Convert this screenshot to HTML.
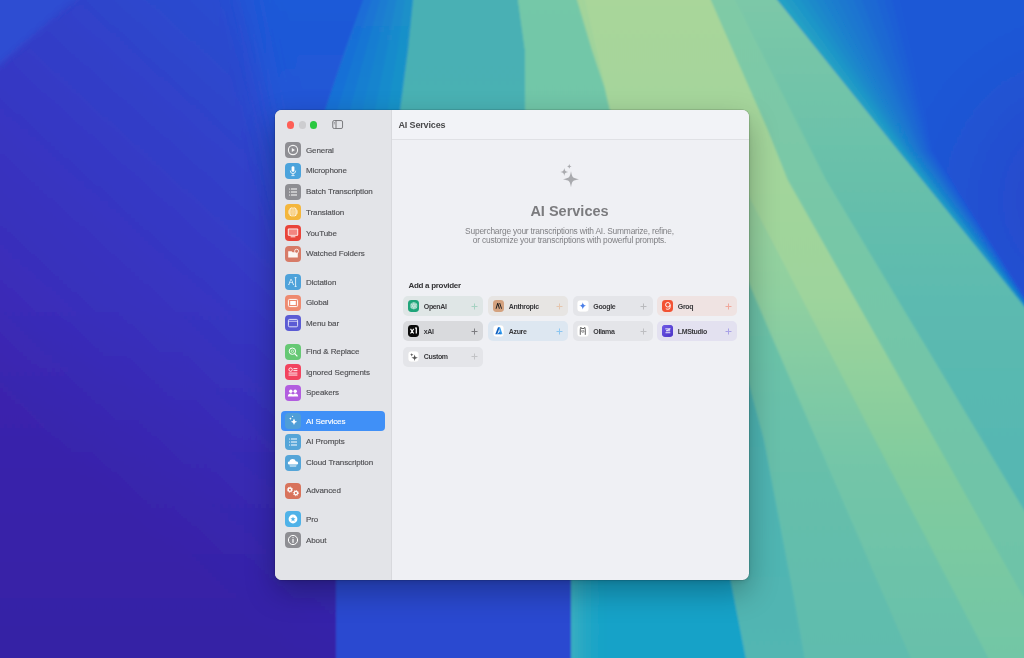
<!DOCTYPE html>
<html><head><meta charset="utf-8">
<style>
*{margin:0;padding:0;box-sizing:border-box}
html,body{width:1024px;height:658px;overflow:hidden;background:#2a4fd0;font-family:"Liberation Sans",sans-serif}
#bg{position:absolute;left:0;top:0;width:1024px;height:658px}
#win{will-change:transform;position:absolute;left:275px;top:110px;width:473.5px;height:470px;border-radius:6.5px;overflow:hidden;background:#eff0f4;
 box-shadow:0 0 0 0.5px rgba(0,0,0,.2),0 12px 30px rgba(0,0,0,.28),0 2px 5px rgba(0,0,0,.1)}
#side{position:absolute;left:0;top:0;width:116.5px;height:470px;background:#e3e4e8;border-right:1px solid #d8d9dd}
#hdr{position:absolute;left:116.5px;top:0;width:358px;height:29.6px;background:#f2f3f7;border-bottom:1px solid #e0e1e5}
.tl{position:absolute;top:11.2px;width:7.4px;height:7.4px;border-radius:50%}
.it{position:absolute;left:10px;height:16px;width:100px}
.ic{position:absolute;left:0;top:0;width:16px;height:16px;border-radius:4px}
.ic svg{position:absolute;left:0;top:0;width:16px;height:16px}
.lb{position:absolute;left:21px;top:2.7px;font-size:8px;line-height:12px;color:#4b4b4d;white-space:nowrap;letter-spacing:-.1px;-webkit-text-stroke:.15px currentColor}
#ttl{position:absolute;left:123.5px;top:9px;font-size:9px;line-height:12px;font-weight:bold;color:#4a4a4c;letter-spacing:-.15px}
#spk{position:absolute;left:284px;top:53px;width:24px;height:24px}
#big{position:absolute;left:116px;width:357px;top:91.9px;text-align:center;font-size:14.5px;line-height:18px;font-weight:bold;color:#7b7b7e}
#sub{position:absolute;left:116px;width:357px;top:116.9px;text-align:center;font-size:8.4px;line-height:9.3px;color:#808084;letter-spacing:-.2px}
#add{position:absolute;left:133.5px;top:171.3px;font-size:8px;line-height:10px;font-weight:bold;color:#333335;letter-spacing:-.3px}
.card{position:absolute;width:80px;height:20.3px;border-radius:5px}
.cic{position:absolute;left:4.5px;top:4.3px;width:11.6px;height:11.6px;border-radius:3.4px;overflow:hidden}
.cic svg{position:absolute;left:0;top:0;width:11.6px;height:11.6px}
.cn{position:absolute;left:20.6px;top:5.6px;font-size:7px;line-height:10px;font-weight:bold;color:#3a3a3d;letter-spacing:-.35px;white-space:nowrap}
.pl{position:absolute;left:67.8px;top:6.9px;width:7px;height:7px}
#sel{position:absolute;left:6.3px;top:300.8px;width:103.5px;height:20.6px;border-radius:4px;background:#4090f7}
</style></head><body>
<svg id="bg" viewBox="0 0 1024 658">
<defs>
<linearGradient id="gBase" x1="360" y1="0" x2="0" y2="400" gradientUnits="userSpaceOnUse">
<stop offset="0" stop-color="#2356d6"/><stop offset="0.3" stop-color="#2e46cc"/><stop offset="0.55" stop-color="#3638c4"/><stop offset="0.8" stop-color="#3a2eba"/><stop offset="1" stop-color="#3c26b0"/></linearGradient>
<linearGradient id="gDark" x1="0" y1="300" x2="0" y2="658" gradientUnits="userSpaceOnUse">
<stop offset="0" stop-color="#2a1890" stop-opacity="0"/><stop offset="1" stop-color="#2a1890" stop-opacity="0.35"/></linearGradient>
<linearGradient id="gBlue" x1="0" y1="0" x2="0" y2="658" gradientUnits="userSpaceOnUse">
<stop offset="0" stop-color="#1e5ad8"/><stop offset="0.5" stop-color="#2650d2"/><stop offset="1" stop-color="#2a48d0"/></linearGradient>
<linearGradient id="gBlueB" x1="0" y1="420" x2="0" y2="658" gradientUnits="userSpaceOnUse">
<stop offset="0" stop-color="#2a4cd0" stop-opacity="0"/><stop offset="0.4" stop-color="#2a4ad0"/><stop offset="1" stop-color="#2a48d0"/></linearGradient>
<linearGradient id="gTM" x1="0" y1="0" x2="0" y2="658" gradientUnits="userSpaceOnUse">
<stop offset="0" stop-color="#7cc8a8"/><stop offset="0.27" stop-color="#68c0aa"/><stop offset="0.46" stop-color="#5cbab0"/><stop offset="1" stop-color="#50b4b4"/></linearGradient>
<linearGradient id="gTeal" x1="0" y1="0" x2="0" y2="658" gradientUnits="userSpaceOnUse">
<stop offset="0" stop-color="#48b0b4"/><stop offset="1" stop-color="#52b6b2"/></linearGradient>
<linearGradient id="gGT" x1="0" y1="0" x2="0" y2="658" gradientUnits="userSpaceOnUse">
<stop offset="0" stop-color="#74c8a8"/><stop offset="0.5" stop-color="#6cc2a8"/><stop offset="1" stop-color="#60bcae"/></linearGradient>
<linearGradient id="gMG" x1="0" y1="0" x2="0" y2="658" gradientUnits="userSpaceOnUse">
<stop offset="0" stop-color="#a4d49a"/><stop offset="0.45" stop-color="#90d0a0"/><stop offset="0.7" stop-color="#74c6a8"/><stop offset="1" stop-color="#68c0aa"/></linearGradient>
<linearGradient id="gLG" x1="0" y1="0" x2="0" y2="658" gradientUnits="userSpaceOnUse">
<stop offset="0" stop-color="#a9d69a"/><stop offset="0.45" stop-color="#9ed49c"/><stop offset="0.7" stop-color="#82cc9e"/><stop offset="1" stop-color="#72c6a6"/></linearGradient>
<linearGradient id="gMint" x1="0" y1="0" x2="0" y2="658" gradientUnits="userSpaceOnUse">
<stop offset="0" stop-color="#80caa6"/><stop offset="0.5" stop-color="#74c6a8"/><stop offset="1" stop-color="#6cc2a8"/></linearGradient>
<linearGradient id="gTR" x1="901" y1="152" x2="1097" y2="-3" gradientUnits="userSpaceOnUse">
<stop offset="0" stop-color="#1a86d0"/><stop offset="0.05" stop-color="#1a70d2"/><stop offset="0.18" stop-color="#1a5ed4"/><stop offset="0.48" stop-color="#2250d2"/><stop offset="1" stop-color="#2e42c8"/></linearGradient>
<radialGradient id="gPur" cx="1090" cy="200" r="190" gradientUnits="userSpaceOnUse">
<stop offset="0" stop-color="#3240c6" stop-opacity="0.95"/><stop offset="0.45" stop-color="#2c46ca" stop-opacity="0.55"/><stop offset="1" stop-color="#2c46ca" stop-opacity="0"/></radialGradient>
<linearGradient id="gEdge" x1="571" y1="0" x2="615" y2="0" gradientUnits="userSpaceOnUse">
<stop offset="0" stop-color="#3aaec0" stop-opacity="1"/><stop offset="0.35" stop-color="#28a8c4" stop-opacity="0.8"/><stop offset="1" stop-color="#14a2c8" stop-opacity="0"/></linearGradient>
<filter id="blur4" x="-20%" y="-20%" width="140%" height="140%"><feGaussianBlur stdDeviation="3"/></filter>
<filter id="blur" x="-5%" y="-5%" width="110%" height="110%"><feGaussianBlur stdDeviation="1.2"/></filter>
<filter id="blurBig" x="-30%" y="-10%" width="160%" height="120%"><feGaussianBlur stdDeviation="14"/></filter>
</defs>
<g filter="url(#blur)">
<rect x="-30" y="-30" width="1090" height="720" fill="url(#gBase)"/>
<rect x="-30" y="-30" width="400" height="720" fill="url(#gDark)"/>
<g filter="url(#blur4)"><polygon points="-40.0,-40.0 118.0,-40.0 -40.0,100.0" fill="#2d4ed2"/></g>
<g filter="url(#blurBig)"><polygon points="235.0,-60.0 420.0,-60.0 440.0,300.0 580.0,560.0 580.0,720.0 370.0,720.0 355.0,500.0 285.0,200.0" fill="url(#gBlue)"/></g>
<polygon points="414.0,-30.0 1060.0,-30.0 1060.0,690.0 570.0,690.0" fill="url(#gTM)"/>
<polygon points="336.0,420.0 571.0,420.0 571.0,690.0 336.0,690.0" fill="url(#gBlueB)"/>
<linearGradient id="gC0" x1="0" y1="0" x2="0" y2="658" gradientUnits="userSpaceOnUse"><stop offset="0" stop-color="#1a6dd7"/><stop offset="0.17" stop-color="#1972d6"/><stop offset="0.85" stop-color="#14a2c8"/></linearGradient>
<polygon points="374.0,-30.0 363.0,0.0 345.0,50.0 325.0,110.0 400.0,300.0 571.0,560.0 571.0,580.0 571.0,690.0 601.8,690.0 598.2,580.0 597.3,560.0 417.3,291.7 338.1,110.0 356.1,50.0 371.9,0.0 381.9,-30.0" fill="url(#gC0)"/>
<linearGradient id="gC1" x1="0" y1="0" x2="0" y2="658" gradientUnits="userSpaceOnUse"><stop offset="0" stop-color="#1a74d4"/><stop offset="0.17" stop-color="#1979d3"/><stop offset="0.85" stop-color="#14a2c8"/></linearGradient>
<polygon points="381.3,-30.0 371.3,0.0 355.5,50.0 337.5,110.0 416.7,291.7 596.7,560.0 597.6,580.0 601.2,690.0 631.9,690.0 624.8,580.0 622.9,560.0 433.9,283.3 350.6,110.0 366.6,50.0 380.3,0.0 389.3,-30.0" fill="url(#gC1)"/>
<linearGradient id="gC2" x1="0" y1="0" x2="0" y2="658" gradientUnits="userSpaceOnUse"><stop offset="0" stop-color="#1a7cd1"/><stop offset="0.17" stop-color="#1980d0"/><stop offset="0.85" stop-color="#14a2c8"/></linearGradient>
<polygon points="388.7,-30.0 379.7,0.0 366.0,50.0 350.0,110.0 433.3,283.3 622.3,560.0 624.2,580.0 631.3,690.0 662.1,690.0 651.4,580.0 648.6,560.0 450.6,275.0 363.1,110.0 377.1,50.0 388.6,0.0 396.6,-30.0" fill="url(#gC2)"/>
<linearGradient id="gC3" x1="0" y1="0" x2="0" y2="658" gradientUnits="userSpaceOnUse"><stop offset="0" stop-color="#1a82cf"/><stop offset="0.17" stop-color="#1985ce"/><stop offset="0.85" stop-color="#14a2c8"/></linearGradient>
<polygon points="396.0,-30.0 388.0,0.0 376.5,50.0 362.5,110.0 450.0,275.0 648.0,560.0 650.8,580.0 661.5,690.0 692.3,690.0 677.9,580.0 674.3,560.0 467.3,266.7 375.6,110.0 387.6,50.0 396.9,0.0 403.9,-30.0" fill="url(#gC3)"/>
<linearGradient id="gC4" x1="0" y1="0" x2="0" y2="658" gradientUnits="userSpaceOnUse"><stop offset="0" stop-color="#1a8acc"/><stop offset="0.17" stop-color="#198ccc"/><stop offset="0.85" stop-color="#14a2c8"/></linearGradient>
<polygon points="403.3,-30.0 396.3,0.0 387.0,50.0 375.0,110.0 466.7,266.7 673.7,560.0 677.3,580.0 691.7,690.0 722.4,690.0 704.5,580.0 699.9,560.0 483.9,258.3 388.1,110.0 398.1,50.0 405.3,0.0 411.3,-30.0" fill="url(#gC4)"/>
<linearGradient id="gC5" x1="0" y1="0" x2="0" y2="658" gradientUnits="userSpaceOnUse"><stop offset="0" stop-color="#1a90c9"/><stop offset="0.17" stop-color="#1992c9"/><stop offset="0.85" stop-color="#14a2c8"/></linearGradient>
<polygon points="410.7,-30.0 404.7,0.0 397.5,50.0 387.5,110.0 483.3,258.3 699.3,560.0 703.9,580.0 721.8,690.0 752.6,690.0 731.1,580.0 725.6,560.0 500.6,250.0 400.6,110.0 408.6,50.0 413.6,0.0 418.6,-30.0" fill="url(#gC5)"/>
<polygon points="571.0,540.0 615.0,540.0 615.0,690.0 571.0,690.0" fill="url(#gEdge)"/>
<polygon points="418.0,-30.0 413.0,0.0 408.0,50.0 400.0,110.0 500.0,250.0 725.0,560.0 730.5,580.0 752.0,690.0 810.0,690.0 794.0,598.0 764.0,440.0 748.0,380.0 525.0,110.0 525.0,50.0 518.0,0.0 518.0,-30.0" fill="url(#gTeal)"/>
<polygon points="518.0,-30.0 518.0,0.0 525.0,50.0 525.0,110.0 748.0,380.0 764.0,440.0 794.0,598.0 810.0,690.0 1006.0,880.0 756.0,300.0 748.0,281.0 612.0,110.0 592.0,50.0 577.0,0.0 570.0,-30.0" fill="url(#gGT)"/>
<polygon points="570.0,-30.0 577.0,0.0 592.0,50.0 612.0,110.0 748.0,281.0 756.0,300.0 1006.0,880.0 1005.0,690.0 988.0,658.0 802.0,300.0 748.0,196.0 610.0,110.0 577.0,-30.0" fill="url(#gMG)"/>
<polygon points="577.0,-30.0 610.0,110.0 748.0,196.0 802.0,300.0 988.0,658.0 1005.0,690.0 1080.0,696.0 788.0,180.0 768.0,130.0 711.0,0.0 705.0,-30.0" fill="url(#gLG)"/>
<polygon points="705.0,-30.0 711.0,0.0 768.0,130.0 788.0,180.0 1080.0,696.0 1060.0,690.0 1060.0,570.0 826.0,180.0 735.0,0.0 720.0,-30.0" fill="url(#gMint)"/>
<polygon points="753.5,-30.0 777.6,0.0 898.0,150.0 979.0,250.0 1024.0,306.0 1063.0,355.0 1060.0,-30.0" fill="#1c58d6"/>
<polygon points="753.5,-30.0 777.6,0.0 898.0,150.0 979.0,250.0 1024.0,306.0 1063.0,355.0 1064.0,355.0 1025.0,306.0 980.6,250.0 900.7,150.0 785.9,0.0 764.2,-30.0" fill="#21a1c5"/>
<polygon points="763.6,-30.0 785.2,0.0 900.1,150.0 980.0,250.0 1024.4,306.0 1063.4,355.0 1064.5,355.0 1025.3,306.0 981.6,250.0 902.9,150.0 793.5,0.0 774.3,-30.0" fill="#209bc6"/>
<polygon points="773.7,-30.0 792.9,0.0 902.2,150.0 981.0,250.0 1024.8,306.0 1063.9,355.0 1064.9,355.0 1025.7,306.0 982.6,250.0 905.0,150.0 801.2,0.0 784.4,-30.0" fill="#1e96c8"/>
<polygon points="783.8,-30.0 800.6,0.0 904.4,150.0 982.0,250.0 1025.1,306.0 1064.3,355.0 1065.3,355.0 1026.1,306.0 983.6,250.0 907.1,150.0 808.8,0.0 794.5,-30.0" fill="#1d90c9"/>
<polygon points="793.9,-30.0 808.2,0.0 906.5,150.0 983.0,250.0 1025.5,306.0 1064.8,355.0 1065.8,355.0 1026.5,306.0 984.6,250.0 909.2,150.0 816.5,0.0 804.6,-30.0" fill="#1c8aca"/>
<polygon points="804.0,-30.0 815.9,0.0 908.6,150.0 984.0,250.0 1025.9,306.0 1065.2,355.0 1066.2,355.0 1026.8,306.0 985.6,250.0 911.4,150.0 824.1,0.0 814.7,-30.0" fill="#1a85cc"/>
<polygon points="814.1,-30.0 823.5,0.0 910.8,150.0 985.0,250.0 1026.2,306.0 1065.6,355.0 1066.7,355.0 1027.2,306.0 986.6,250.0 913.5,150.0 831.8,0.0 824.8,-30.0" fill="#1a80cd"/>
<polygon points="824.2,-30.0 831.2,0.0 912.9,150.0 986.0,250.0 1026.6,306.0 1066.1,355.0 1067.1,355.0 1027.6,306.0 987.6,250.0 915.6,150.0 839.4,0.0 834.9,-30.0" fill="#1a7cce"/>
<polygon points="834.2,-30.0 838.8,0.0 915.0,150.0 987.0,250.0 1027.0,306.0 1066.5,355.0 1067.5,355.0 1028.0,306.0 988.6,250.0 917.7,150.0 847.1,0.0 844.9,-30.0" fill="#1b78cf"/>
<polygon points="844.3,-30.0 846.5,0.0 917.1,150.0 988.0,250.0 1027.4,306.0 1066.9,355.0 1068.0,355.0 1028.3,306.0 989.6,250.0 919.9,150.0 854.7,0.0 855.0,-30.0" fill="#1b74d0"/>
<polygon points="854.4,-30.0 854.1,0.0 919.2,150.0 989.0,250.0 1027.8,306.0 1067.4,355.0 1068.4,355.0 1028.7,306.0 990.6,250.0 922.0,150.0 862.4,0.0 865.1,-30.0" fill="#1b6fd1"/>
<polygon points="864.5,-30.0 861.8,0.0 921.4,150.0 990.0,250.0 1028.1,306.0 1067.8,355.0 1068.8,355.0 1029.1,306.0 991.6,250.0 924.1,150.0 870.0,0.0 875.2,-30.0" fill="#1b6bd2"/>
<polygon points="874.6,-30.0 869.4,0.0 923.5,150.0 991.0,250.0 1028.5,306.0 1068.2,355.0 1069.3,355.0 1029.5,306.0 992.6,250.0 926.2,150.0 877.6,0.0 885.3,-30.0" fill="#1b67d3"/>
<polygon points="884.7,-30.0 877.0,0.0 925.6,150.0 992.0,250.0 1028.9,306.0 1068.7,355.0 1069.7,355.0 1029.8,306.0 993.6,250.0 928.4,150.0 885.3,0.0 895.4,-30.0" fill="#1c63d4"/>
<polygon points="894.8,-30.0 884.7,0.0 927.8,150.0 993.0,250.0 1029.2,306.0 1069.1,355.0 1070.2,355.0 1030.2,306.0 994.6,250.0 930.5,150.0 893.0,0.0 905.5,-30.0" fill="#1c5ed5"/>
<polygon points="904.9,-30.0 892.4,0.0 929.9,150.0 994.0,250.0 1029.6,306.0 1069.6,355.0 1070.6,355.0 1030.6,306.0 995.6,250.0 932.6,150.0 900.6,0.0 915.6,-30.0" fill="#1c5ad6"/>
<clipPath id="cpTR"><polygon points="915.0,-30.0 900.0,0.0 932.0,150.0 995.0,250.0 1030.0,306.0 1070.0,355.0 1060.0,-30.0" fill="#000"/></clipPath>
<rect x="880" y="-30" width="200" height="420" fill="url(#gPur)" clip-path="url(#cpTR)"/>
</g>
</svg>
<div id="win">
 <div id="side">
  <div class="tl" style="left:12.1px;background:#fe5f57"></div>
  <div class="tl" style="left:23.5px;background:#cdcdd0"></div>
  <div class="tl" style="left:35px;background:#2ac840"></div>
  <svg id="tog" viewBox="0 0 12 10" style="position:absolute;left:57.3px;top:10px;width:11.3px;height:9.1px"><rect x=".6" y=".6" width="10.8" height="8.8" rx="1.6" fill="none" stroke="#6e6e72" stroke-width="1"/><path d="M4.2 .8 V9.2" stroke="#6e6e72" stroke-width="1"/><path d="M1.8 2.8 H3 M1.8 4.2 H3" stroke="#6e6e72" stroke-width=".7"/></svg>
<!--SIDE-->
<div id="sel"></div>
<div class="it" style="top:32px"><div class="ic" style="background:#8e8e93"><svg viewBox="0 0 16 16"><circle cx="8" cy="8" r="4.6" fill="none" stroke="#fff" stroke-width="1.1" opacity=".9"/><path d="M6.8 5.9 L10 8 L6.8 10.1 Z" fill="#fff" opacity=".9"/></svg></div><div class="lb" style="color:#505054">General</div></div>
<div class="it" style="top:52.75px"><div class="ic" style="background:#4ba3dc"><svg viewBox="0 0 16 16"><rect x="6.6" y="3.2" width="2.8" height="5.6" rx="1.4" fill="#fff"/><path d="M5.3 7.6 Q5.3 10.6 8 10.6 Q10.7 10.6 10.7 7.6" fill="none" stroke="#fff" stroke-width=".8"/><path d="M8 10.6 V12.4 M6.4 12.6 H9.6" stroke="#fff" stroke-width=".8"/></svg></div><div class="lb" style="color:#505054">Microphone</div></div>
<div class="it" style="top:73.5px"><div class="ic" style="background:#8e8e93"><svg viewBox="0 0 16 16"><g fill="#fff"><circle cx="4.6" cy="5" r=".6"/><circle cx="4.6" cy="8" r=".6"/><circle cx="4.6" cy="11" r=".6"/><rect x="6" y="4.5" width="6" height="1"/><rect x="6" y="7.5" width="6" height="1"/><rect x="6" y="10.5" width="6" height="1"/></g></svg></div><div class="lb" style="color:#505054">Batch Transcription</div></div>
<div class="it" style="top:94.25px"><div class="ic" style="background:#f4b63c"><svg viewBox="0 0 16 16"><circle cx="8" cy="8" r="4.7" fill="#fff" opacity=".88"/><g fill="none" stroke="#f4b63c" stroke-width=".55"><ellipse cx="8" cy="8" rx="2" ry="4.6"/><path d="M3.4 8 H12.6 M3.9 6 H12.1 M3.9 10 H12.1 M8 3.4 V12.6"/></g></svg></div><div class="lb" style="color:#505054">Translation</div></div>
<div class="it" style="top:115px"><div class="ic" style="background:#e9443a"><svg viewBox="0 0 16 16"><rect x="2.8" y="3.5" width="10.4" height="7.3" rx="1" fill="#fff" opacity=".95"/><rect x="3.7" y="4.4" width="8.6" height="5.5" fill="#f28580"/><rect x="5.6" y="11.3" width="4.8" height="1" fill="#fff" opacity=".9"/></svg></div><div class="lb" style="color:#505054">YouTube</div></div>
<div class="it" style="top:135.75px"><div class="ic" style="background:#d77b68"><svg viewBox="0 0 16 16"><path d="M3.2 5.2 H6.6 L7.6 6.2 H12.8 V11.6 H3.2 Z" fill="#fff" opacity=".92"/><circle cx="11.6" cy="5.2" r="2" fill="#d77b68" stroke="#fff" stroke-width=".8"/></svg></div><div class="lb" style="color:#505054">Watched Folders</div></div>
<div class="it" style="top:164px"><div class="ic" style="background:#4ea2da"><svg viewBox="0 0 16 16"><text x="3.2" y="11.4" font-family="Liberation Sans" font-size="8.5" fill="#fff">A</text><path d="M10.6 3.6 V12.4 M9.6 3.6 H11.6 M9.6 12.4 H11.6" stroke="#fff" stroke-width=".8"/></svg></div><div class="lb" style="color:#505054">Dictation</div></div>
<div class="it" style="top:184.7px"><div class="ic" style="background:#ee8a70"><svg viewBox="0 0 16 16"><rect x="3.4" y="4.4" width="9.2" height="7.2" rx="1.2" fill="none" stroke="#fff" stroke-width="1"/><rect x="5.2" y="6" width="5.6" height="4" fill="#fff"/></svg></div><div class="lb" style="color:#505054">Global</div></div>
<div class="it" style="top:205.4px"><div class="ic" style="background:#5b5bd4"><svg viewBox="0 0 16 16"><rect x="3.4" y="4.4" width="9.2" height="7.4" rx="1.2" fill="none" stroke="#fff" stroke-width=".9" opacity=".9"/><path d="M3.6 6.3 H12.4" stroke="#fff" stroke-width=".8" opacity=".8"/></svg></div><div class="lb" style="color:#505054">Menu bar</div></div>
<div class="it" style="top:233.5px"><div class="ic" style="background:#66c874"><svg viewBox="0 0 16 16"><circle cx="7.4" cy="7.2" r="3.2" fill="none" stroke="#fff" stroke-width="1"/><path d="M9.7 9.6 L12.4 12.3" stroke="#fff" stroke-width="1.2"/><circle cx="7.4" cy="7.2" r="1.2" fill="none" stroke="#fff" stroke-width=".6"/></svg></div><div class="lb" style="color:#505054">Find &amp; Replace</div></div>
<div class="it" style="top:254.1px"><div class="ic" style="background:#f2435e"><svg viewBox="0 0 16 16"><circle cx="5.6" cy="5.6" r="1.7" fill="none" stroke="#fff" stroke-width=".9"/><g fill="#fff"><rect x="8.4" y="4.2" width="4" height=".9"/><rect x="8.4" y="6.2" width="4" height=".9"/><rect x="3.6" y="8.6" width="8.8" height=".9"/><rect x="3.6" y="10.6" width="8.8" height=".9"/></g></svg></div><div class="lb" style="color:#505054">Ignored Segments</div></div>
<div class="it" style="top:274.8px"><div class="ic" style="background:#b25ddf"><svg viewBox="0 0 16 16"><g fill="#fff"><circle cx="5.8" cy="6.2" r="1.7"/><circle cx="10.2" cy="6.2" r="1.7"/><path d="M2.8 11.6 Q3 8.6 5.8 8.6 Q8.4 8.6 8.2 11.6 Z"/><path d="M7.8 11.6 Q7.6 8.6 10.2 8.6 Q13 8.6 13.2 11.6 Z"/></g></svg></div><div class="lb" style="color:#505054">Speakers</div></div>
<div class="it" style="top:303.1px"><div class="ic" style="background:#4f9ed8"><svg viewBox="0 0 16 16"><path d="M9 5.6 Q9.4 8.4 12.2 8.8 Q9.4 9.2 9 12 Q8.6 9.2 5.8 8.8 Q8.6 8.4 9 5.6Z" fill="#fff"/><path d="M5.4 4.2 Q5.6 5.4 6.8 5.6 Q5.6 5.8 5.4 7 Q5.2 5.8 4 5.6 Q5.2 5.4 5.4 4.2Z" fill="#fff"/><circle cx="7.6" cy="3.4" r=".6" fill="#fff"/></svg></div><div class="lb" style="color:#ffffff">AI Services</div></div>
<div class="it" style="top:323.8px"><div class="ic" style="background:#55a5d8"><svg viewBox="0 0 16 16"><g fill="#fff"><circle cx="4.6" cy="5" r=".6"/><circle cx="4.6" cy="8" r=".6"/><circle cx="4.6" cy="11" r=".6"/><rect x="6" y="4.5" width="6" height="1"/><rect x="6" y="7.5" width="6" height="1"/><rect x="6" y="10.5" width="6" height="1"/></g></svg></div><div class="lb" style="color:#505054">AI Prompts</div></div>
<div class="it" style="top:344.5px"><div class="ic" style="background:#55a5d8"><svg viewBox="0 0 16 16"><path d="M4.4 9.4 Q2.8 9.4 2.8 7.9 Q2.8 6.5 4.5 6.5 Q4.8 4 7.6 4 Q10.2 4 10.8 6.2 Q13.2 6.3 13.2 7.9 Q13.2 9.4 11.6 9.4 Z" fill="#fff"/><g fill="#fff" opacity=".6"><rect x="4.6" y="10" width="6.8" height=".8"/><rect x="4.8" y="11.2" width="6.4" height=".8"/></g></svg></div><div class="lb" style="color:#505054">Cloud Transcription</div></div>
<div class="it" style="top:372.8px"><div class="ic" style="background:#d8735c"><svg viewBox="0 0 16 16"><g fill="none" stroke="#fff"><circle cx="4.9" cy="6.7" r="1.7" stroke-width="1.3"/><circle cx="4.9" cy="6.7" r="2.6" stroke-width="1" stroke-dasharray="1 1.04"/><circle cx="10.9" cy="10.1" r="1.7" stroke-width="1.2"/><circle cx="10.9" cy="10.1" r="2.6" stroke-width="1" stroke-dasharray="1 1.04"/></g></svg></div><div class="lb" style="color:#505054">Advanced</div></div>
<div class="it" style="top:401.1px"><div class="ic" style="background:#4fb2e8"><svg viewBox="0 0 16 16"><circle cx="8" cy="8" r="4.4" fill="#fff"/><path d="M8 5.4 L8.7 7.2 L10.6 7.3 L9.1 8.5 L9.6 10.4 L8 9.3 L6.4 10.4 L6.9 8.5 L5.4 7.3 L7.3 7.2 Z" fill="#4fb2e8"/></svg></div><div class="lb" style="color:#505054">Pro</div></div>
<div class="it" style="top:421.9px"><div class="ic" style="background:#8e8e93"><svg viewBox="0 0 16 16"><circle cx="8" cy="8" r="4.6" fill="none" stroke="#fff" stroke-width="1"/><circle cx="8" cy="5.6" r=".7" fill="#fff"/><rect x="7.4" y="7" width="1.2" height="3.8" fill="#fff"/></svg></div><div class="lb" style="color:#505054">About</div></div>
<!--/SIDE-->
 </div>
 <div id="hdr"></div>
<svg width="0" height="0" style="position:absolute"><defs><linearGradient id="lmg" x1="0" y1="0" x2="1" y2="1"><stop offset="0" stop-color="#6f5ae8"/><stop offset="1" stop-color="#4a32c4"/></linearGradient></defs></svg>
<!--CONTENT-->
<div id="ttl">AI Services</div>
<svg id="spk" viewBox="0 0 24 24"><path d="M12.00 8.30 C13.36 14.94 13.36 14.94 20.00 16.30 C13.36 17.66 13.36 17.66 12.00 24.30 C10.64 17.66 10.64 17.66 4.00 16.30 C10.64 14.94 10.64 14.94 12.00 8.30Z M5.30 5.10 C6.08 8.22 6.08 8.22 9.20 9.00 C6.08 9.78 6.08 9.78 5.30 12.90 C4.52 9.78 4.52 9.78 1.40 9.00 C4.52 8.22 4.52 8.22 5.30 5.10Z M10.30 1.10 C10.81 2.89 10.81 2.89 12.60 3.40 C10.81 3.91 10.81 3.91 10.30 5.70 C9.79 3.91 9.79 3.91 8.00 3.40 C9.79 2.89 9.79 2.89 10.30 1.10Z" fill="#a9aaae"/></svg>
<div id="big">AI Services</div>
<div id="sub">Supercharge your transcriptions with AI. Summarize, refine,<br>or customize your transcriptions with powerful prompts.</div>
<div id="add">Add a provider</div>
<div class="card" style="left:128.2px;top:186px;background:#dfe6e6"><div class="cic" style="background:#1fa57a;"><svg viewBox="0 0 12 12"><circle cx="6" cy="6" r="3.7" fill="#fff" opacity=".5"/><g fill="none" stroke="#fff" stroke-width=".55" opacity=".75"><circle cx="6" cy="6" r="1.3"/><path d="M6 2.3 V4.7 M6 7.3 V9.7 M2.8 4.2 L4.9 5.4 M7.1 6.6 L9.2 7.8 M2.8 7.8 L4.9 6.6 M7.1 5.4 L9.2 4.2"/></g></svg></div><div class="cn">OpenAI</div><svg class="pl" viewBox="0 0 8 8"><path d="M4 .6 V7.4 M.6 4 H7.4" stroke="#a6d2c2" stroke-width="1.15"/></svg></div>
<div class="card" style="left:213.2px;top:186px;background:#e7e5e3"><div class="cic" style="background:#d4a27f;"><svg viewBox="0 0 12 12"><path d="M2.6 9 L4.4 3.2 H5.4 L7.2 9 H6.1 L4.9 4.9 L3.7 9 Z M6.4 3.2 H7.4 L9.4 9 H8.4 Z" fill="#1f1f1f"/></svg></div><div class="cn">Anthropic</div><svg class="pl" viewBox="0 0 8 8"><path d="M4 .6 V7.4 M.6 4 H7.4" stroke="#e5c6ae" stroke-width="1.15"/></svg></div>
<div class="card" style="left:297.7px;top:186px;background:#e4e5e9"><div class="cic" style="background:#ffffff;box-shadow:inset 0 0 0 .5px rgba(0,0,0,.08);"><svg viewBox="0 0 12 12"><path d="M6 2.2 Q6.4 5.6 9.8 6 Q6.4 6.4 6 9.8 Q5.6 6.4 2.2 6 Q5.6 5.6 6 2.2Z" fill="#4a7ee8"/></svg></div><div class="cn">Google</div><svg class="pl" viewBox="0 0 8 8"><path d="M4 .6 V7.4 M.6 4 H7.4" stroke="#b9babd" stroke-width="1.15"/></svg></div>
<div class="card" style="left:382.2px;top:186px;background:#efe3e2"><div class="cic" style="background:#f25233;"><svg viewBox="0 0 12 12"><path d="M6 2.6 Q8.4 2.6 8.4 5 Q8.4 7.3 6 7.3 Q3.7 7.3 3.7 5 Q3.7 2.6 6 2.6 Z M8.4 5 V7.4 Q8.4 9.6 6 9.6 Q4.6 9.6 4 8.8" fill="none" stroke="#fff" stroke-width="1"/></svg></div><div class="cn">Groq</div><svg class="pl" viewBox="0 0 8 8"><path d="M4 .6 V7.4 M.6 4 H7.4" stroke="#f0a89c" stroke-width="1.15"/></svg></div>
<div class="card" style="left:128.2px;top:211.2px;background:#d9dadd"><div class="cic" style="background:#0b0b0b;"><svg viewBox="0 0 12 12"><path d="M2.6 4 L5.9 8.8 M5.9 4 L2.6 8.8" stroke="#fff" stroke-width="1.2"/><path d="M8.6 2.6 L7.6 3.8 M8.6 2.6 V8.8" stroke="#fff" stroke-width="1.3"/></svg></div><div class="cn">xAI</div><svg class="pl" viewBox="0 0 8 8"><path d="M4 .6 V7.4 M.6 4 H7.4" stroke="#7c7c80" stroke-width="1.15"/></svg></div>
<div class="card" style="left:213.2px;top:211.2px;background:#dde7f1"><div class="cic" style="background:#ffffff;box-shadow:inset 0 0 0 .5px rgba(0,0,0,.08);"><svg viewBox="0 0 12 12"><path d="M2.4 9.6 L5.2 2.2 H7 L4.4 9.6 Z" fill="#0f5fbf"/><path d="M6 2.2 H7.4 L9.8 9.6 H7.6 Z" fill="#3aa0ef"/><path d="M4.2 9.6 L7.2 6.6 L8.4 9.6 Z" fill="#1a78d8"/></svg></div><div class="cn">Azure</div><svg class="pl" viewBox="0 0 8 8"><path d="M4 .6 V7.4 M.6 4 H7.4" stroke="#8cc6f0" stroke-width="1.15"/></svg></div>
<div class="card" style="left:297.7px;top:211.2px;background:#e4e5e9"><div class="cic" style="background:#ffffff;box-shadow:inset 0 0 0 .5px rgba(0,0,0,.08);"><svg viewBox="0 0 12 12"><path d="M3.4 10.2 V5.2 Q3.4 3.4 4 2.4 L4.6 3.6 H7.4 L8 2.4 Q8.6 3.4 8.6 5.2 V10.2" fill="none" stroke="#333" stroke-width=".8"/><circle cx="5" cy="5.6" r=".4" fill="#333"/><circle cx="7" cy="5.6" r=".4" fill="#333"/><ellipse cx="6" cy="6.8" rx="1.2" ry=".8" fill="none" stroke="#333" stroke-width=".5"/></svg></div><div class="cn">Ollama</div><svg class="pl" viewBox="0 0 8 8"><path d="M4 .6 V7.4 M.6 4 H7.4" stroke="#bdbec1" stroke-width="1.15"/></svg></div>
<div class="card" style="left:382.2px;top:211.2px;background:#e3e1f0"><div class="cic" style="background:#5b45d6;"><svg viewBox="0 0 12 12"><rect x="0" y="0" width="12" height="12" rx="3" fill="url(#lmg)"/><path d="M3.4 4 H8.6 L4.4 6 H8.4 M3.6 8 H8.6" stroke="#fff" stroke-width=".9" fill="none"/></svg></div><div class="cn">LMStudio</div><svg class="pl" viewBox="0 0 8 8"><path d="M4 .6 V7.4 M.6 4 H7.4" stroke="#a9a2e6" stroke-width="1.15"/></svg></div>
<div class="card" style="left:128.2px;top:236.5px;background:#e4e5e9"><div class="cic" style="background:#ffffff;box-shadow:inset 0 0 0 .5px rgba(0,0,0,.08);"><svg viewBox="0 0 12 12"><path d="M6.90 3.70 C7.58 6.42 7.58 6.42 10.30 7.10 C7.58 7.78 7.58 7.78 6.90 10.50 C6.22 7.78 6.22 7.78 3.50 7.10 C6.22 6.42 6.22 6.42 6.90 3.70Z M3.90 2.10 C4.30 3.50 4.30 3.50 5.70 3.90 C4.30 4.30 4.30 4.30 3.90 5.70 C3.50 4.30 3.50 4.30 2.10 3.90 C3.50 3.50 3.50 3.50 3.90 2.10Z" fill="#555"/></svg></div><div class="cn">Custom</div><svg class="pl" viewBox="0 0 8 8"><path d="M4 .6 V7.4 M.6 4 H7.4" stroke="#c2c3c6" stroke-width="1.15"/></svg></div>
<!--/CONTENT-->
</div>
</body></html>
